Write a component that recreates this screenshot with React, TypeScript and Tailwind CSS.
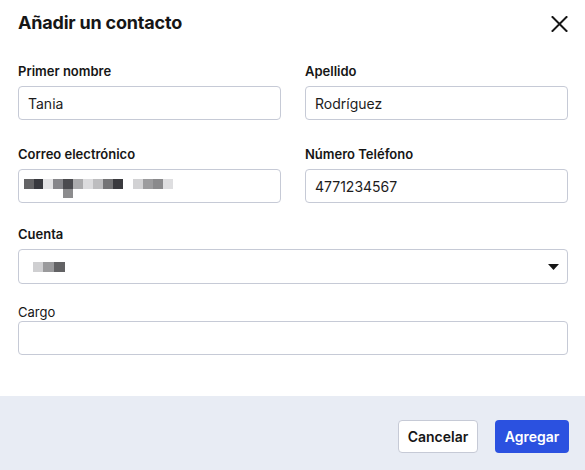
import React from "react"

const inputCls =
  "h-[34px] w-full rounded-[4px] border border-[#c6cad6] bg-white px-[9px] text-[14px] text-[#1c1c1c] outline-none"

const Label = ({ children }: { children: React.ReactNode }) => (
  <div className="mb-[5px] text-[13px] font-semibold leading-[20px] text-[#161616]">{children}</div>
)

// pixelated (blurred) email value
const EmailBlur = () => (
  <div className="relative flex h-[10px] items-start">
    <div className="h-[10px] w-[10px] bg-[#646466]" />
    <div className="h-[10px] w-[9px] bg-[#38393e]" />
    <div className="h-[10px] w-[10px] bg-[#e2e2e4]" />
    <div className="h-[10px] w-[10px] bg-[#86868a]" />
    <div className="flex w-[10px] flex-col">
      <div className="h-[10px] w-[10px] bg-[#4a4a4e]" />
      <div className="h-[9px] w-[10px] bg-[#8c8c8e]" />
    </div>
    <div className="h-[10px] w-[10px] bg-[#ababad]" />
    <div className="h-[10px] w-[10px] bg-[#dcdcde]" />
    <div className="h-[10px] w-[10px] bg-[#bdbdbf]" />
    <div className="h-[10px] w-[10px] bg-[#747476]" />
    <div className="h-[10px] w-[10px] bg-[#3a3a3e]" />
    <div className="h-[10px] w-[10px] bg-white" />
    <div className="h-[10px] w-[10px] bg-[#d2d2d4]" />
    <div className="h-[10px] w-[10px] bg-[#9c9c9e]" />
    <div className="h-[10px] w-[10px] bg-[#8a8a8c]" />
    <div className="h-[10px] w-[10px] bg-[#dedee0]" />
  </div>
)

export default function App() {
  return (
    <div
      className="flex h-[470px] w-[585px] flex-col bg-white text-[#161616]"
      style={{ fontFamily: "Inter, 'Noto Sans', sans-serif" }}
    >
      <div className="flex items-center justify-between pl-[18px] pr-[17px] pt-[11px]">
        <h1 className="text-[18px] font-bold leading-[24px] tracking-[-0.2px]">Añadir un contacto</h1>
        <svg width="17" height="16" viewBox="0 0 17 16" className="mt-[2px]">
          <path d="M1.5 1 L15.5 15 M15.5 1 L1.5 15" stroke="#161616" strokeWidth="2" strokeLinecap="square" />
        </svg>
      </div>

      <div className="flex flex-1 flex-col pl-[18px] pr-[17px] pt-[26px]">
        <div className="grid grid-cols-2 gap-x-[24px]">
          <div>
            <Label>Primer nombre</Label>
            <input className={inputCls} defaultValue="Tania" />
          </div>
          <div>
            <Label>Apellido</Label>
            <input className={inputCls} defaultValue="Rodríguez" />
          </div>
        </div>

        <div className="mt-[24px] grid grid-cols-2 gap-x-[24px]">
          <div>
            <Label>Correo electrónico</Label>
            <div className="h-[34px] w-full rounded-[4px] border border-[#c6cad6] pl-[5px] pt-[9px]">
              <EmailBlur />
            </div>
          </div>
          <div>
            <Label>Número Teléfono</Label>
            <input className={inputCls} defaultValue="4771234567" />
          </div>
        </div>

        <div className="mt-[21px]">
          <Label>Cuenta</Label>
          <div className="flex h-[35px] w-full items-center justify-between rounded-[4px] border border-[#c6cad6] pl-[14px] pr-[8px]">
            <div className="flex">
              <div className="h-[10px] w-[10px] bg-[#cfcfd1]" />
              <div className="h-[10px] w-[11px] bg-[#9a9a9c]" />
              <div className="h-[10px] w-[11px] bg-[#626264]" />
            </div>
            <svg width="11" height="6" viewBox="0 0 11 6">
              <path d="M0 0 H11 L5.5 6 Z" fill="#161616" />
            </svg>
          </div>
        </div>

        <div className="mt-[20px]">
          <div className="mb-[1px] text-[13px] leading-[16px] text-[#161616]">Cargo</div>
          <input className={inputCls} />
        </div>
      </div>

      <div className="flex h-[74px] items-start justify-end gap-[17px] bg-[#e8ecf4] pr-[16px] pt-[24px]">
        <button className="h-[33px] w-[80px] rounded-[4px] border border-[#c6cad6] bg-white text-[14px] font-semibold text-[#161616]">
          Cancelar
        </button>
        <button className="h-[33px] w-[74px] rounded-[4px] bg-[#2b51e0] text-[14px] font-semibold text-white">
          Agregar
        </button>
      </div>
    </div>
  )
}
